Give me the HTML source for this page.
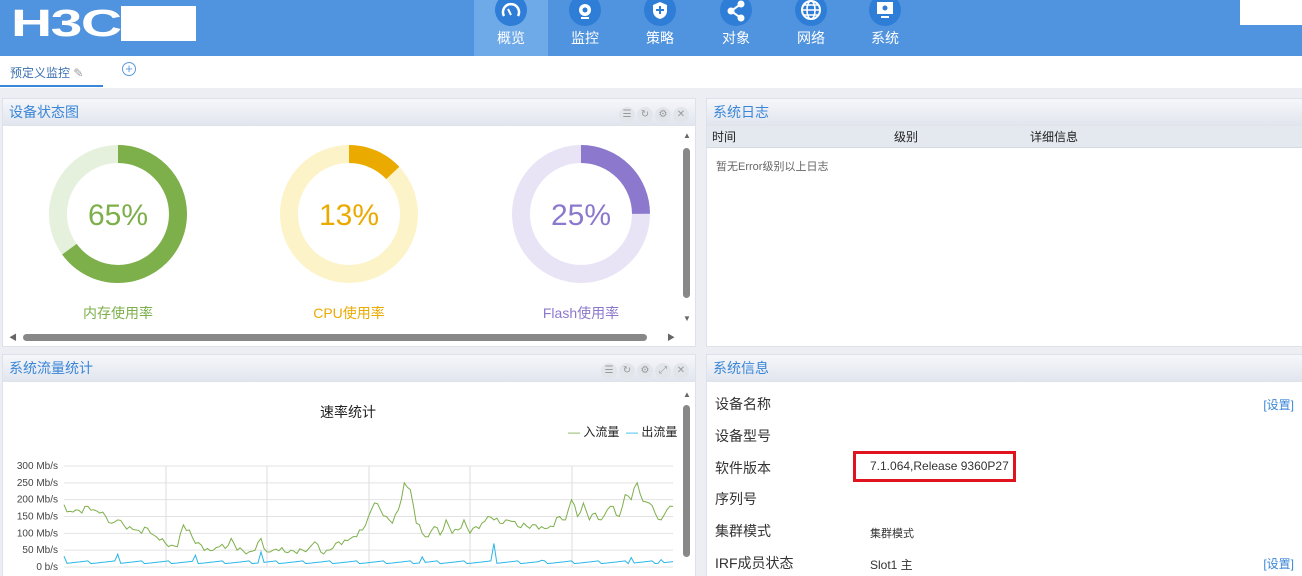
<!DOCTYPE html>
<html style="width:1302px;height:576px;overflow:hidden"><head><meta charset="utf-8">
<style>
*{margin:0;padding:0;box-sizing:border-box}
body{width:1302px;height:576px;overflow:hidden;background:#eceef3;font-family:"Liberation Sans","Noto Sans CJK SC",sans-serif;position:relative}
.hdr{position:absolute;left:0;top:0;width:1302px;height:56px;background:#5093de}
.logo{position:absolute;left:11px;top:3px;color:#fff;font:bold 38px "Liberation Sans",sans-serif;letter-spacing:-1px;transform:scaleX(1.5);transform-origin:left}
.wbox{position:absolute;background:#fff}
.nav{position:absolute;top:0;width:74px;height:56px;text-align:center;color:#fff;font-size:14px}
.nav.act{background:#6ea9e8}
.nav .ic{position:absolute;left:21px;top:-6px;width:32px;height:32px;border-radius:50%;background:#2e7dd6}
.nav .lb{position:absolute;left:0;width:74px;top:28px}
.tabbar{position:absolute;left:0;top:56px;width:1302px;height:32px;background:#fff}
.panel{position:absolute;background:#fff;border:1px solid #dde2ea;overflow:hidden}
.ph{height:27px;background:linear-gradient(#f6f7fa,#e1e5ee);color:#3a86d8;font-size:14px;line-height:27px;padding-left:6px;border-bottom:1px solid #dfe3ea}
.tools{position:absolute;right:6px;top:5px}
.tools span{display:inline-block;width:16px;height:16px;border-radius:50%;background:#e2e5ea;margin-left:2px;color:#999;font-size:10px;text-align:center;line-height:16px}
.lbl{position:absolute;font-size:14px;text-align:center;width:140px}
.row{position:absolute;left:8px;font-size:14px;color:#333}
</style></head><body>
<div class="hdr">
 <div class="logo">H3C</div>
 <div class="wbox" style="left:121px;top:6px;width:75px;height:35px"></div>
 <div class="wbox" style="left:1240px;top:0;width:62px;height:25px"></div>
 <div class="nav act" style="left:474px"><div class="ic"><svg width="32" height="32"><path d="M9 22a8 8 0 1 1 14 0" stroke="#fff" stroke-width="2.5" fill="none"/><path d="M16 21l-3-6" stroke="#fff" stroke-width="2"/></svg></div><div class="lb">概览</div></div>
 <div class="nav" style="left:548px"><div class="ic"><svg width="32" height="32"><circle cx="16" cy="16" r="6" fill="#fff"/><circle cx="16" cy="16" r="2.5" fill="#2e7dd6"/><rect x="12" y="23" width="8" height="2" fill="#fff"/></svg></div><div class="lb">监控</div></div>
 <div class="nav" style="left:623px"><div class="ic"><svg width="32" height="32"><path d="M9 11l7-3 7 3v6c0 4-3 7-7 8-4-1-7-4-7-8z" fill="#fff"/><path d="M16 12v8M12 16h8" stroke="#2e7dd6" stroke-width="2"/></svg></div><div class="lb">策略</div></div>
 <div class="nav" style="left:699px"><div class="ic"><svg width="32" height="32"><circle cx="21" cy="10" r="3.5" fill="#fff"/><circle cx="11" cy="17" r="3.5" fill="#fff"/><circle cx="21" cy="24" r="3.5" fill="#fff"/><path d="M21 10L11 17 21 24" stroke="#fff" stroke-width="2" fill="none"/></svg></div><div class="lb">对象</div></div>
 <div class="nav" style="left:774px"><div class="ic"><svg width="32" height="32"><circle cx="16" cy="16" r="9" stroke="#fff" stroke-width="2" fill="none"/><ellipse cx="16" cy="16" rx="4" ry="9" stroke="#fff" stroke-width="1.6" fill="none"/><path d="M7 16h18M9 11h14M9 21h14" stroke="#fff" stroke-width="1.6"/></svg></div><div class="lb">网络</div></div>
 <div class="nav" style="left:848px"><div class="ic"><svg width="32" height="32"><rect x="8" y="8" width="16" height="12" fill="#fff"/><circle cx="16" cy="14" r="2.5" fill="#2e7dd6"/><rect x="12" y="22" width="8" height="2" fill="#fff"/></svg></div><div class="lb">系统</div></div>
</div>
<div class="tabbar">
 <div style="position:absolute;left:10px;top:8px;font-size:12px;color:#3a6fb0">预定义监控 <span style="color:#999">✎</span></div>
 <div style="position:absolute;left:0;top:29px;width:103px;height:2px;background:#3a86d8"></div>
 <div style="position:absolute;left:122px;top:6px;width:14px;height:14px;border:1.5px solid #5a9ae0;border-radius:50%;color:#5a9ae0;font-size:13px;line-height:11px;text-align:center">+</div>
</div>

<div class="panel" style="left:2px;top:98px;width:694px;height:249px">
 <div class="ph">设备状态图</div>
 <div class="tools"><span>☰</span><span>↻</span><span>⚙</span><span>✕</span></div>
 <svg style="position:absolute;left:0;top:0" width="694" height="249">
  <g fill="none" stroke-width="18">
   <circle cx="115" cy="115" r="60" stroke="#e5f1dd"/>
   <circle cx="115" cy="115" r="60" stroke="#7daf4b" stroke-dasharray="245 377" transform="rotate(-90 115 115)"/>
   <circle cx="346" cy="115" r="60" stroke="#fdf3c8"/>
   <circle cx="346" cy="115" r="60" stroke="#eaaa00" stroke-dasharray="49 377" transform="rotate(-90 346 115)"/>
   <circle cx="578" cy="115" r="60" stroke="#e8e4f6"/>
   <circle cx="578" cy="115" r="60" stroke="#8c78cc" stroke-dasharray="94 377" transform="rotate(-90 578 115)"/>
  </g>
  <text x="115" y="126" font-size="30" fill="#7daf4b" text-anchor="middle" font-family="Liberation Sans">65%</text>
  <text x="346" y="126" font-size="30" fill="#eaaa00" text-anchor="middle" font-family="Liberation Sans">13%</text>
  <text x="578" y="126" font-size="30" fill="#8c78cc" text-anchor="middle" font-family="Liberation Sans">25%</text>
 </svg>
 <div class="lbl" style="left:45px;top:204px;color:#7daf4b">内存使用率</div>
 <div class="lbl" style="left:276px;top:204px;color:#eaaa00">CPU使用率</div>
 <div class="lbl" style="left:508px;top:204px;color:#8c78cc">Flash使用率</div>
 <div style="position:absolute;left:680px;top:49px;width:7px;height:150px;background:#888;border-radius:4px"></div>
 <div style="position:absolute;left:20px;top:235px;width:624px;height:7px;background:#888;border-radius:4px"></div>
 <div style="position:absolute;left:680px;top:32px;font-size:8px;color:#666">▲</div>
 <div style="position:absolute;left:680px;top:215px;font-size:8px;color:#666">▼</div>
 <div style="position:absolute;left:6px;top:233px;font-size:8px;color:#666">◀</div>
 <div style="position:absolute;left:664px;top:233px;font-size:8px;color:#666">▶</div>
</div>

<div class="panel" style="left:706px;top:98px;width:597px;height:249px">
 <div class="ph">系统日志</div>
 <div style="height:22px;background:#e4e9f0;border-bottom:1px solid #d4dae3;font-size:12px;color:#222;line-height:22px;position:relative">
  <span style="position:absolute;left:5px">时间</span><span style="position:absolute;left:187px">级别</span><span style="position:absolute;left:323px">详细信息</span></div>
 <div style="position:absolute;left:9px;top:59px;font-size:11px;color:#666">暂无Error级别以上日志</div>
</div>

<div class="panel" style="left:2px;top:354px;width:694px;height:230px">
 <div class="ph">系统流量统计</div>
 <div class="tools"><span>☰</span><span>↻</span><span>⚙</span><span>⤢</span><span>✕</span></div>
 <div style="position:absolute;left:680px;top:50px;width:7px;height:152px;background:#888;border-radius:4px"></div>
 <div style="position:absolute;left:680px;top:35px;font-size:8px;color:#666">▲</div>
</div>
<svg id="ch" style="position:absolute;left:0;top:440px" width="680" height="136" viewBox="0 440 680 136"></svg>
<div style="position:absolute;left:320px;top:402px;font-size:14px;color:#222">速率统计</div>
<div style="position:absolute;left:568px;top:423px;font-size:12px;color:#222"><span style="color:#7daf4b">—</span> 入流量 &nbsp;<span style="color:#29b6e8">—</span> 出流量</div>

<div class="panel" style="left:706px;top:354px;width:597px;height:230px">
 <div class="ph">系统信息</div>
 <div class="row" style="top:39px">设备名称</div>
 <div class="row" style="top:71px">设备型号</div>
 <div class="row" style="top:103px">软件版本</div>
 <div class="row" style="top:134px">序列号</div>
 <div class="row" style="top:166px">集群模式</div>
 <div class="row" style="top:198px">IRF成员状态</div>
 <div style="position:absolute;right:8px;top:41px;font-size:12px;color:#3a86d8">[设置]</div>
 <div style="position:absolute;right:8px;top:200px;font-size:12px;color:#3a86d8">[设置]</div>
 <div style="position:absolute;left:146px;top:96px;width:163px;height:31px;border:3px solid #e0141e;font-size:12px;color:#333;line-height:25px;padding-left:14px">7.1.064,Release 9360P27</div>
 <div style="position:absolute;left:163px;top:170px;font-size:11px;color:#333">集群模式</div>
 <div style="position:absolute;left:163px;top:201px;font-size:12px;color:#333">Slot1 主</div>
</div>

<script>
var s=document.getElementById('ch'),h='';
var x0=64,x1=673,y0=567,k=101/300;
for(var i=0;i<=6;i++){var v=i*50,y=y0-v*k;h+='<line x1="'+x0+'" x2="'+x1+'" y1="'+y+'" y2="'+y+'" stroke="#e3e3e3"/>';
h+='<text x="58" y="'+(y+3)+'" font-size="10" text-anchor="end" fill="#444" font-family="Liberation Sans">'+(v?v+' Mb/s':'0 b/s')+'</text>';}
[166,267,369,470,572].forEach(function(x){h+='<line x1="'+x+'" x2="'+x+'" y1="466" y2="567" stroke="#ddd"/>';});
var g0=[185,165,170,160,180,170,160,150,130,140,125,120,110,100,115,95,80,70,65,60,125,110,70,65,55,50,60,55,85,50,48,45,50,85,45,50,48,45,50,40,50,55,75,45,50,55,75,80,85,90,110,150,190,170,150,130,170,250,230,130,100,90,120,95,140,100,110,140,100,120,130,150,140,130,140,135,120,130,115,125,120,115,120,150,140,200,150,190,140,160,140,170,180,150,215,200,250,195,190,160,140,170,180];
var g=[];for(var i=0;i<g0.length-1;i++){g.push(g0[i]);g.push((g0[i]+g0[i+1])/2+((i*53)%23)-11);}g.push(g0[g0.length-1]);
var b=[];for(var i=0;i<g.length;i++)b.push(10+((i*37)%9));b[0]=32;b[18]=38;b[44]=35;b[66]=45;b[120]=30;b[144]=70;b[160]=20;b[190]=28;b[200]=22;
function p(a){var st=(x1-x0)/(a.length-1),d='';a.forEach(function(v,i){d+=(i?'L':'M')+(x0+i*st).toFixed(1)+' '+(y0-v*k).toFixed(1);});return d;}
h+='<path d="'+p(g)+'" fill="none" stroke="#7daf4b" stroke-width="1"/>';
h+='<path d="'+p(b)+'" fill="none" stroke="#29b6e8" stroke-width="1"/>';
s.innerHTML=h;
</script>
</body></html>
